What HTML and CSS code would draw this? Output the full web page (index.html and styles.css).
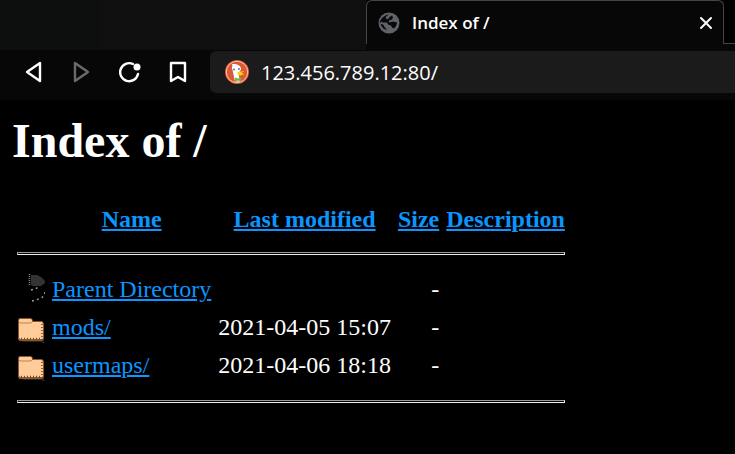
FILE: index.html
```html
<!DOCTYPE html>
<html lang="en">
<head>
<meta charset="utf-8">
<title>Index of /</title>
<link rel="stylesheet" href="styles.css">
</head>
<body>
<svg class="defs" aria-hidden="true">
  <symbol id="folder" viewBox="0 0 28 32">
    <path d="M4 28h22v3H6zM25 12l2 2v17l1 1h-3z" fill="#252525"/>
    <path d="M2 7h12l2 2v1h9l2 2v16l-2 2H2l-1-2V9z" fill="#8a572c"/>
    <path d="M3 8h11l1 1v2h10l1 2v14l-1 1H3l-1-1V9z" fill="#ffcc99"/>
    <path d="M2 11l1 1h11l1-1" fill="none" stroke="#bd8350"/>
    <path d="M4 27.500h21M25 13v14" fill="none" stroke="#70441f" stroke-width="1.500" stroke-dasharray="1 2"/>
  </symbol>
</svg>
<header>
  <div class="tabs">
    <div class="tab">
      <svg class="globe" viewBox="0 0 22 22" aria-hidden="true">
        <circle cx="11" cy="11" r="10.500" fill="#5f6368"/>
        <path d="M11 2.500c-2 1-4 3-3 4l2 1 1-2 3-2 1 2-1 2-3 1v2l4-1 4 1c0 2-1 4-3 6l-2-1-1-2-3-1-1-2H5l-2.500-1c0 4 2 7 5 8l1 .5V17l-2-2-1-2-4-2.500C3 6 7 3 11 2.500z" fill="#08090a"/>
      </svg>
      <span class="title">Index of /</span>
      <button class="close" aria-label="Close tab"><svg viewBox="0 0 14 14"><path d="M2 2l10 10M12 2L2 12"/></svg></button>
    </div>
    <div class="strip-end"></div>
  </div>
  <div class="toolbar">
    <button aria-label="Back"><svg viewBox="0 0 22 22"><path d="M17 2v18L4 11z"/></svg></button>
    <button aria-label="Forward" disabled><svg viewBox="0 0 22 22"><path d="M4 2v18l13-9z"/></svg></button>
    <button aria-label="Reload"><svg viewBox="0 0 22 22"><path d="M14 3a9 9 0 1 0 5 10"/><circle class="dot" cx="18" cy="6" r="3.500"/></svg></button>
    <button aria-label="Bookmark"><svg viewBox="0 0 22 22"><path d="M4 2h14v18l-7-4-7 4z"/></svg></button>
    <div class="address">
      <svg class="duck" viewBox="0 0 24 24" aria-hidden="true">
        <circle cx="12" cy="12" r="12" fill="#de5833"/>
        <circle cx="12" cy="12" r="10.700" fill="none" stroke="#f7c8b9" stroke-width="1"/>
        <path d="M10 21.500L7.500 10C6.500 7 7 5 10 4.500c4-.5 6 2 6 5l-2 3v4l1 5z" fill="#fff"/>
        <path d="M7 4h3l2 1-4 2z" fill="#fff"/>
        <circle cx="9" cy="9.500" r="1" fill="#5679b5"/><circle cx="14" cy="9" r="1" fill="#5679b5"/>
        <path d="M12.500 12l7-1-3 2 3 1-4 1.500-3-1z" fill="#fdd20a"/>
        <path d="M10 17.500l3 1 3-1v4l-3-1-3 1z" fill="#65bc46"/>
      </svg>
      <input type="text" aria-label="Address" value="123.456.789.12:80/">
    </div>
  </div>
</header>
<main>
  <h1>Index of /</h1>
  <table>
    <thead>
      <tr><th></th><th><a href="#">Name</a></th><th><a href="#">Last modified</a></th><th><a href="#">Size</a></th><th><a href="#">Description</a></th></tr>
      <tr><td class="rule" colspan="5"><hr></td></tr>
    </thead>
    <tbody>
      <tr><td><svg class="icon" viewBox="0 0 28 32" aria-hidden="true">
        <path d="M14 2h6l4 2 4 4v2l-4 3h-8l-2-1z" fill="#333"/>
        <path d="M12.500 1v11" stroke="#888" stroke-width="1.500" stroke-dasharray="1 1"/>
        <path d="M14 17l4-1 5-3M15 28l7-2q6-2 6-8" fill="none" stroke="#999" stroke-width="1.500" stroke-dasharray="2 3"/>
      </svg></td><td><a href="#">Parent Directory</a></td><td></td><td class="size">-</td><td></td></tr>
      <tr><td><svg class="icon" aria-hidden="true"><use href="#folder"/></svg></td><td><a href="#">mods/</a></td><td>2021-04-05 15:07</td><td class="size">-</td><td></td></tr>
      <tr><td><svg class="icon" aria-hidden="true"><use href="#folder"/></svg></td><td><a href="#">usermaps/</a></td><td>2021-04-06 18:18</td><td class="size">-</td><td></td></tr>
      <tr><td class="rule" colspan="5"><hr></td></tr>
    </tbody>
  </table>
</main>
</body>
</html>
```
FILE: styles.css
```css
* { box-sizing: border-box; }

body {
  margin: 0;
  background: #000;
  color: #fff;
  font-family: "Liberation Serif", serif;
  font-size: 24px;
}

.defs {
  display: block;
  width: 0;
  height: 0;
}

button {
  display: grid;
  place-items: center;
  padding: 0;
  border: 0;
  background: none;
}

button svg {
  width: 22px;
  height: 22px;
  fill: none;
  stroke: #fff;
  stroke-width: 2;
  stroke-linejoin: round;
  stroke-linecap: round;
}

button:disabled { opacity: 0.4; }

button .dot {
  fill: #fff;
  stroke: none;
}

.tabs {
  display: flex;
  height: 50px;
  padding-left: 366px;
  background: linear-gradient(90deg, #0c0f0d 100px, #0f0f0f 100px 366px, #070707 366px);
}

.tab {
  display: flex;
  flex: 1;
  align-items: center;
  height: 44px;
  padding: 0 10px 0 11px;
  border: 1px solid #444;
  border-bottom: 0;
  border-radius: 6px 6px 0 0;
  background: #070707;
}

.strip-end {
  width: 11px;
  height: 44px;
  border-bottom: 1px solid #444;
  background: #000;
}

.globe {
  width: 22px;
  height: 22px;
}

.title {
  flex: 1;
  margin-left: 12px;
  font: 600 17px/22px "Open Sans", sans-serif;
}

.close svg {
  width: 14px;
  height: 14px;
}

.toolbar {
  display: flex;
  align-items: center;
  gap: 26px;
  height: 50px;
  padding: 1px 0 7px 23px;
  background: #070707;
}

.toolbar button svg { stroke-width: 2.4; }

.address {
  display: flex;
  flex: 1;
  align-items: center;
  gap: 12px;
  height: 42px;
  margin-left: -5px;
  padding-left: 15px;
  border-radius: 6px 0 0 6px;
  background: #1b1b1b;
}

.duck {
  width: 24px;
  height: 24px;
}

input {
  flex: 1;
  min-width: 0;
  padding: 0;
  border: 0;
  outline: 0;
  background: none;
  color: #fff;
  font: 20px "Open Sans", sans-serif;
}

main { padding: 13px 12px; }

h1 {
  margin: 0 0 32px;
  font-size: 48px;
  line-height: 56px;
}

table {
  border-spacing: 3px 2px;
  line-height: 28px;
}

th, td { padding: 2px; }

td { white-space: nowrap; }

a { color: #0a95ff; }

.size { text-align: right; }

.icon {
  display: block;
  width: 28px;
  height: 32px;
}

hr {
  margin: 13px 0 12px;
  border: 1px solid;
  border-color: #9a9a9a #eee #eee #9a9a9a;
  height: 3px;
}
```
